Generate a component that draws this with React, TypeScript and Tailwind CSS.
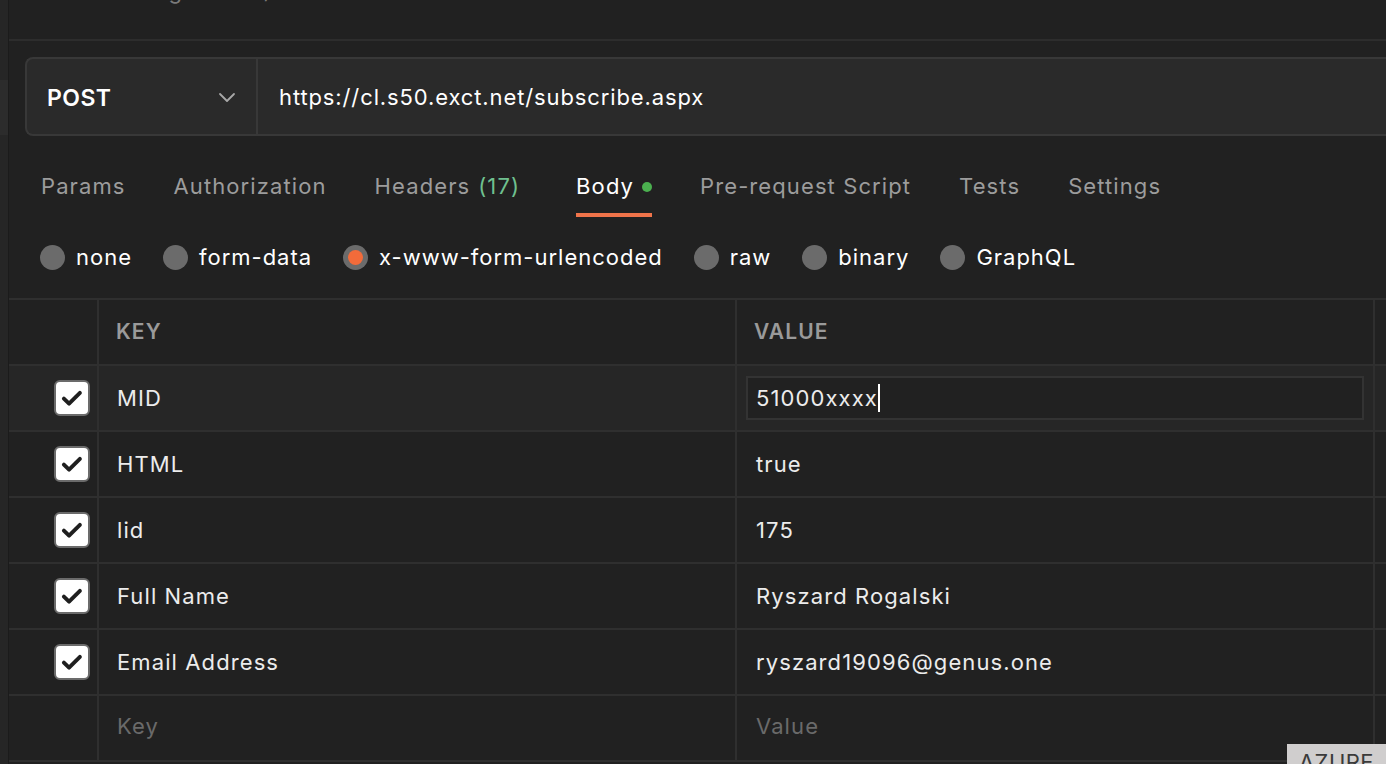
const tabs = [
  { label: "Params" },
  { label: "Authorization" },
  { label: "Headers", count: "(17)" },
  { label: "Body", active: true },
  { label: "Pre-request Script" },
  { label: "Tests" },
  { label: "Settings" },
]

const bodyTypes = [
  { label: "none" },
  { label: "form-data" },
  { label: "x-www-form-urlencoded", selected: true },
  { label: "raw" },
  { label: "binary" },
  { label: "GraphQL" },
]

const rows = [
  { key: "MID", value: "51000xxxx", editing: true },
  { key: "HTML", value: "true" },
  { key: "lid", value: "175" },
  { key: "Full Name", value: "Ryszard Rogalski" },
  { key: "Email Address", value: "ryszard19096@genus.one" },
]

function Checkbox() {
  return (
    <div className="flex h-[36px] w-[36px] items-center justify-center rounded-[6px] border-2 border-[#6b6b6b] bg-white">
      <svg width="26" height="26" viewBox="0 0 24 24" fill="none">
        <path d="M4.5 12.5l4.8 4.8 10-10" stroke="#1f1f1f" strokeWidth="3.6" strokeLinecap="round" strokeLinejoin="round" />
      </svg>
    </div>
  )
}

export default function App() {
  return (
    <div className="flex h-[764px] w-[1386px] overflow-hidden bg-[#212121] font-['Inter',sans-serif] text-[22px] tracking-[0.05em] text-[#ececec]">
      {/* left sidebar edge */}
      <div className="flex w-[9px] flex-col border-r border-[#1b1b1b] bg-[#262626]">
        <div className="h-[80px]" />
        <div className="h-[55px] bg-[#2c2c2c]" />
        <div className="flex-1" />
      </div>

      <div className="flex min-w-0 flex-1 flex-col">
        <div className="h-[41px] shrink-0 border-b-2 border-[#2d2d2d] pl-[60px]">
          <div className="mt-[-25px] text-[22px] text-[#7a7a7a]">Marketing Cloud / Subscribe</div>
        </div>

        {/* request bar */}
        <div className="pl-[16px] pt-[16px]">
          <div className="flex h-[79px] rounded-l-[8px] border-2 border-r-0 border-[#383838] bg-[#2a2a2a]">
            <div className="flex w-[231px] items-center justify-between border-r-2 border-[#383838] pl-[20px] pr-[20px]">
              <span className="mt-[3px] text-[23px] font-semibold tracking-[0.02em] text-white">POST</span>
              <svg width="18" height="18" viewBox="0 0 18 18" fill="none">
                <path d="M2 6l7 7 7-7" stroke="#a8a8a8" strokeWidth="1.8" strokeLinecap="round" strokeLinejoin="round" />
              </svg>
            </div>
            <div className="mt-[1px] flex items-center pl-[21px] tracking-[0.04em] text-white">https://cl.s50.exct.net/subscribe.aspx</div>
          </div>
        </div>

        {/* tabs */}
        <div className="flex h-[81px] items-stretch gap-[48px] pl-[32px]">
          {tabs.map((t) => (
            <div key={t.label} className={"flex flex-col justify-end " + (t.active ? "ml-[8px]" : "")}>
              <div className={"flex items-center gap-[8px] pb-[10px] " + (t.active ? "text-white" : "text-[#9c9c9c]")}>
                <span>{t.label}</span>
                {t.count && <span className="text-[#6fc08f]">{t.count}</span>}
                {t.active && <span className="h-[10px] w-[10px] rounded-full bg-[#4bb04f]" />}
              </div>
              <div className={"h-[4px] " + (t.active ? "bg-[#f0744a]" : "")} />
            </div>
          ))}
        </div>

        {/* body types */}
        <div className="flex h-[81px] items-center gap-[31px] pl-[31px] tracking-[0.045em]">
          {bodyTypes.map((b) => (
            <div key={b.label} className="flex items-center gap-[11px]">
              {b.selected ? (
                <span className="flex h-[25px] w-[25px] items-center justify-center rounded-full bg-[#6b6b6b]">
                  <span className="h-[15px] w-[15px] rounded-full bg-[#f26b3a]" />
                </span>
              ) : (
                <span className="h-[25px] w-[25px] rounded-full bg-[#6b6b6b]" />
              )}
              <span className="text-white">{b.label}</span>
            </div>
          ))}
        </div>

        {/* table */}
        <div className="border-t-2 border-[#2f2f2f]">
          <div className="grid grid-cols-[90px_638px_638px_1fr] border-b-2 border-[#2f2f2f]">
            <div className="h-[64px] border-r-2 border-[#2f2f2f]" />
            <div className="flex items-center border-r-2 border-[#2f2f2f] pl-[17px] text-[21px] font-semibold text-[#9a9a9a]">KEY</div>
            <div className="flex items-center border-r-2 border-[#2f2f2f] pl-[17px] text-[21px] font-semibold text-[#9a9a9a]">VALUE</div>
            <div />
          </div>
          {rows.map((r) => (
            <div
              key={r.key}
              className={"grid grid-cols-[90px_638px_638px_1fr] border-b-2 border-[#2f2f2f] " + (r.editing ? "bg-[#262626]" : "")}
            >
              <div className="flex h-[64px] items-center justify-end border-r-2 border-[#2f2f2f] pr-[7px]">
                <Checkbox />
              </div>
              <div className="flex items-center border-r-2 border-[#2f2f2f] pl-[18px]">{r.key}</div>
              <div className="flex items-center border-r-2 border-[#2f2f2f] pl-[9px] pr-[9px]">
                {r.editing ? (
                  <div className="flex h-[44px] w-full items-center border-2 border-[#333333] bg-[#212121] pl-[8px]">
                    <span>{r.value}</span>
                    <span className="h-[28px] w-[2px] bg-white" />
                  </div>
                ) : (
                  <span className="pl-[10px]">{r.value}</span>
                )}
              </div>
              <div />
            </div>
          ))}
          <div className="grid grid-cols-[90px_638px_638px_1fr] border-b-2 border-[#2f2f2f]">
            <div className="h-[64px] border-r-2 border-[#2f2f2f]" />
            <div className="flex items-center border-r-2 border-[#2f2f2f] pb-[3px] pl-[18px] text-[#6a6a6a]">Key</div>
            <div className="flex items-center border-r-2 border-[#2f2f2f] pb-[3px] pl-[19px] text-[#6a6a6a]">Value</div>
            <div />
          </div>
        </div>
      </div>

      <div className="absolute left-[1287px] top-[744px] h-[30px] w-[110px] bg-[#d0cece] pl-[12px] text-[22px] leading-[36px] tracking-[0.02em] text-[#3a3a3a]">
        AZURE
      </div>
    </div>
  )
}
